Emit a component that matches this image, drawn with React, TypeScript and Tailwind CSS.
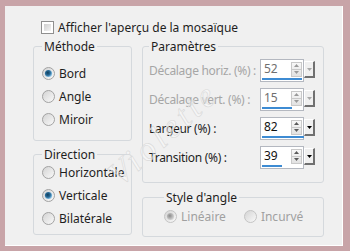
import React from 'react';

type RadioProps = { checked?: boolean; disabled?: boolean };

const RadioMark: React.FC<RadioProps> = ({ checked, disabled }) => (
  <svg width="13" height="13" viewBox="0 0 13 13" className="shrink-0">
    <defs>
      <linearGradient id="rbg" x1="0" y1="0" x2="1" y2="1">
        <stop offset="0" stopColor="#d2d2d2" />
        <stop offset="1" stopColor="#fbfbfb" />
      </linearGradient>
      <radialGradient id="rdot" cx="0.4" cy="0.4" r="0.6">
        <stop offset="0" stopColor="#0f3e5c" />
        <stop offset="0.6" stopColor="#2c6f9c" />
        <stop offset="1" stopColor="#8ac3e6" />
      </radialGradient>
      <radialGradient id="rdotd" cx="0.4" cy="0.4" r="0.6">
        <stop offset="0" stopColor="#8a8a8a" />
        <stop offset="1" stopColor="#d4d4d4" />
      </radialGradient>
    </defs>
    <circle cx="6.5" cy="6.5" r="6" fill="url(#rbg)" stroke={disabled ? '#c4c4c4' : '#a2a2a2'} strokeWidth="1" />
    {checked && <circle cx="6.5" cy="6.5" r="3.6" fill={disabled ? 'url(#rdotd)' : 'url(#rdot)'} />}
  </svg>
);

const Radio: React.FC<RadioProps & { label: string }> = ({ label, checked, disabled }) => (
  <div className="h-[23px] flex items-center gap-[4px]">
    <RadioMark checked={checked} disabled={disabled} />
    <span className={disabled ? 'text-[#a0a0a0]' : 'text-[#1e1e1e]'}>{label}</span>
  </div>
);

const Spinner: React.FC<{ value: number; bar: number; disabled?: boolean }> = ({ value, bar, disabled }) => (
  <div className="flex items-start shrink-0">
    <div className="w-[44px] h-[23px] border border-[#b4b8c0] bg-white flex flex-col">
      <div className="flex-1 flex items-center justify-between pl-[3px] pr-[1px]">
        <span className={disabled ? 'text-[#6f6f6f]' : 'text-[#111]'}>{value}</span>
        <div className="w-[11px] h-[15px] flex flex-col border border-[#c9c9c9] bg-gradient-to-b from-[#f8f8f8] to-[#e2e2e2]">
          <div className="flex-1 flex items-center justify-center border-b border-[#c9c9c9]">
            <svg width="5" height="3" viewBox="0 0 5 3">
              <path d="M0 3 L2.5 0 L5 3 Z" fill={disabled ? '#9a9a9a' : '#5a5a5a'} />
            </svg>
          </div>
          <div className="flex-1 flex items-center justify-center">
            <svg width="5" height="3" viewBox="0 0 5 3">
              <path d="M0 0 L2.5 3 L5 0 Z" fill={disabled ? '#9a9a9a' : '#5a5a5a'} />
            </svg>
          </div>
        </div>
      </div>
      <div className="h-[3px] px-[1px] mb-[1px]">
        <div className="h-full bg-[#3d8bd3]" style={{ width: bar }} />
      </div>
    </div>
    <div className="w-[11px] h-[17px] mt-[2px] bg-[#f0f0f0] border-t border-l border-t-white border-l-white border-r-2 border-b-2 border-r-[#707070] border-b-[#707070] flex items-center justify-center">
      <svg width="5" height="3" viewBox="0 0 5 3">
        <path d="M0 0 L2.5 3 L5 0 Z" fill={disabled ? '#a8a8a8' : '#000'} />
      </svg>
    </div>
  </div>
);

const ParamRow: React.FC<{ label: string; value: number; bar: number; disabled?: boolean }> = ({ label, value, bar, disabled }) => (
  <div className="h-[29px] flex items-center justify-between">
    <span className={`whitespace-nowrap tracking-[-0.3px] ${disabled ? 'text-[#a6a6a6]' : 'text-[#1e1e1e]'}`}>{label}</span>
    <Spinner value={value} bar={bar} disabled={disabled} />
  </div>
);

const Group: React.FC<{ title: string; className?: string; children: React.ReactNode }> = ({ title, className, children }) => (
  <fieldset className={`border border-[#d5d9dd] rounded-[3px] ${className ?? ''}`}>
    <legend className="px-[2px] leading-[15px] text-[#1e1e1e]">{title}</legend>
    {children}
  </fieldset>
);

export default function App() {
  return (
    <div className="w-[350px] h-[251px] bg-[#c8a4a8] pt-[6px] pl-[5px] pr-[7px] pb-[5px] font-['Noto_Sans',sans-serif] text-[12px] overflow-hidden">
      <div className="relative w-full h-full bg-[#f0f0f0] border-r border-b border-white pl-[28px] pr-[14px] pt-[14px]">
        <label className="flex items-center gap-[4px] ml-[8px] h-[15px]">
          <span className="w-[13px] h-[13px] border border-[#8f8f8f] bg-white p-[2px]">
            <span className="block w-full h-full bg-gradient-to-br from-[#cfcfcf] to-[#f4f4f4]" />
          </span>
          <span className="text-[#1e1e1e]">Afficher l'aperçu de la mosaïque</span>
        </label>

        <div className="flex gap-[10px] mt-[4px]">
          <div className="w-[99px] flex flex-col gap-[6px]">
            <Group title="Méthode" className="pl-[8px] pt-[8px] pb-[9px]">
              <Radio label="Bord" checked />
              <Radio label="Angle" />
              <Radio label="Miroir" />
            </Group>
            <Group title="Direction" className="pl-[8px] pb-[4px]">
              <div className="-mt-[1px]">
                <Radio label="Horizontale" />
                <Radio label="Verticale" checked />
                <Radio label="Bilatérale" />
              </div>
            </Group>
          </div>

          <div className="w-[182px] flex flex-col gap-[7px]">
            <Group title="Paramètres" className="pl-[6px] pr-[8px] pt-[2px] pb-[10px]">
              <ParamRow label="Décalage horiz. (%) :" value={52} bar={40} disabled />
              <ParamRow label="Décalage vert. (%) :" value={15} bar={30} disabled />
              <ParamRow label="Largeur (%) :" value={82} bar={42} />
              <ParamRow label="Transition (%) :" value={39} bar={20} />
            </Group>
            <Group title="Style d'angle" className="pl-[21px] pb-[8px]">
              <div className="flex gap-[18px]">
                <Radio label="Linéaire" checked disabled />
                <Radio label="Incurvé" disabled />
              </div>
            </Group>
          </div>
        </div>

        {/* watermark */}
        <div className="absolute left-[73px] top-[102px] w-[170px] text-center -rotate-[42deg] text-[34px] tracking-[4px] italic font-['Liberation_Serif',serif] text-white/40 [-webkit-text-stroke:0.6px_#d9d9d9] pointer-events-none select-none">
          Violette
        </div>
      </div>
    </div>
  );
}
